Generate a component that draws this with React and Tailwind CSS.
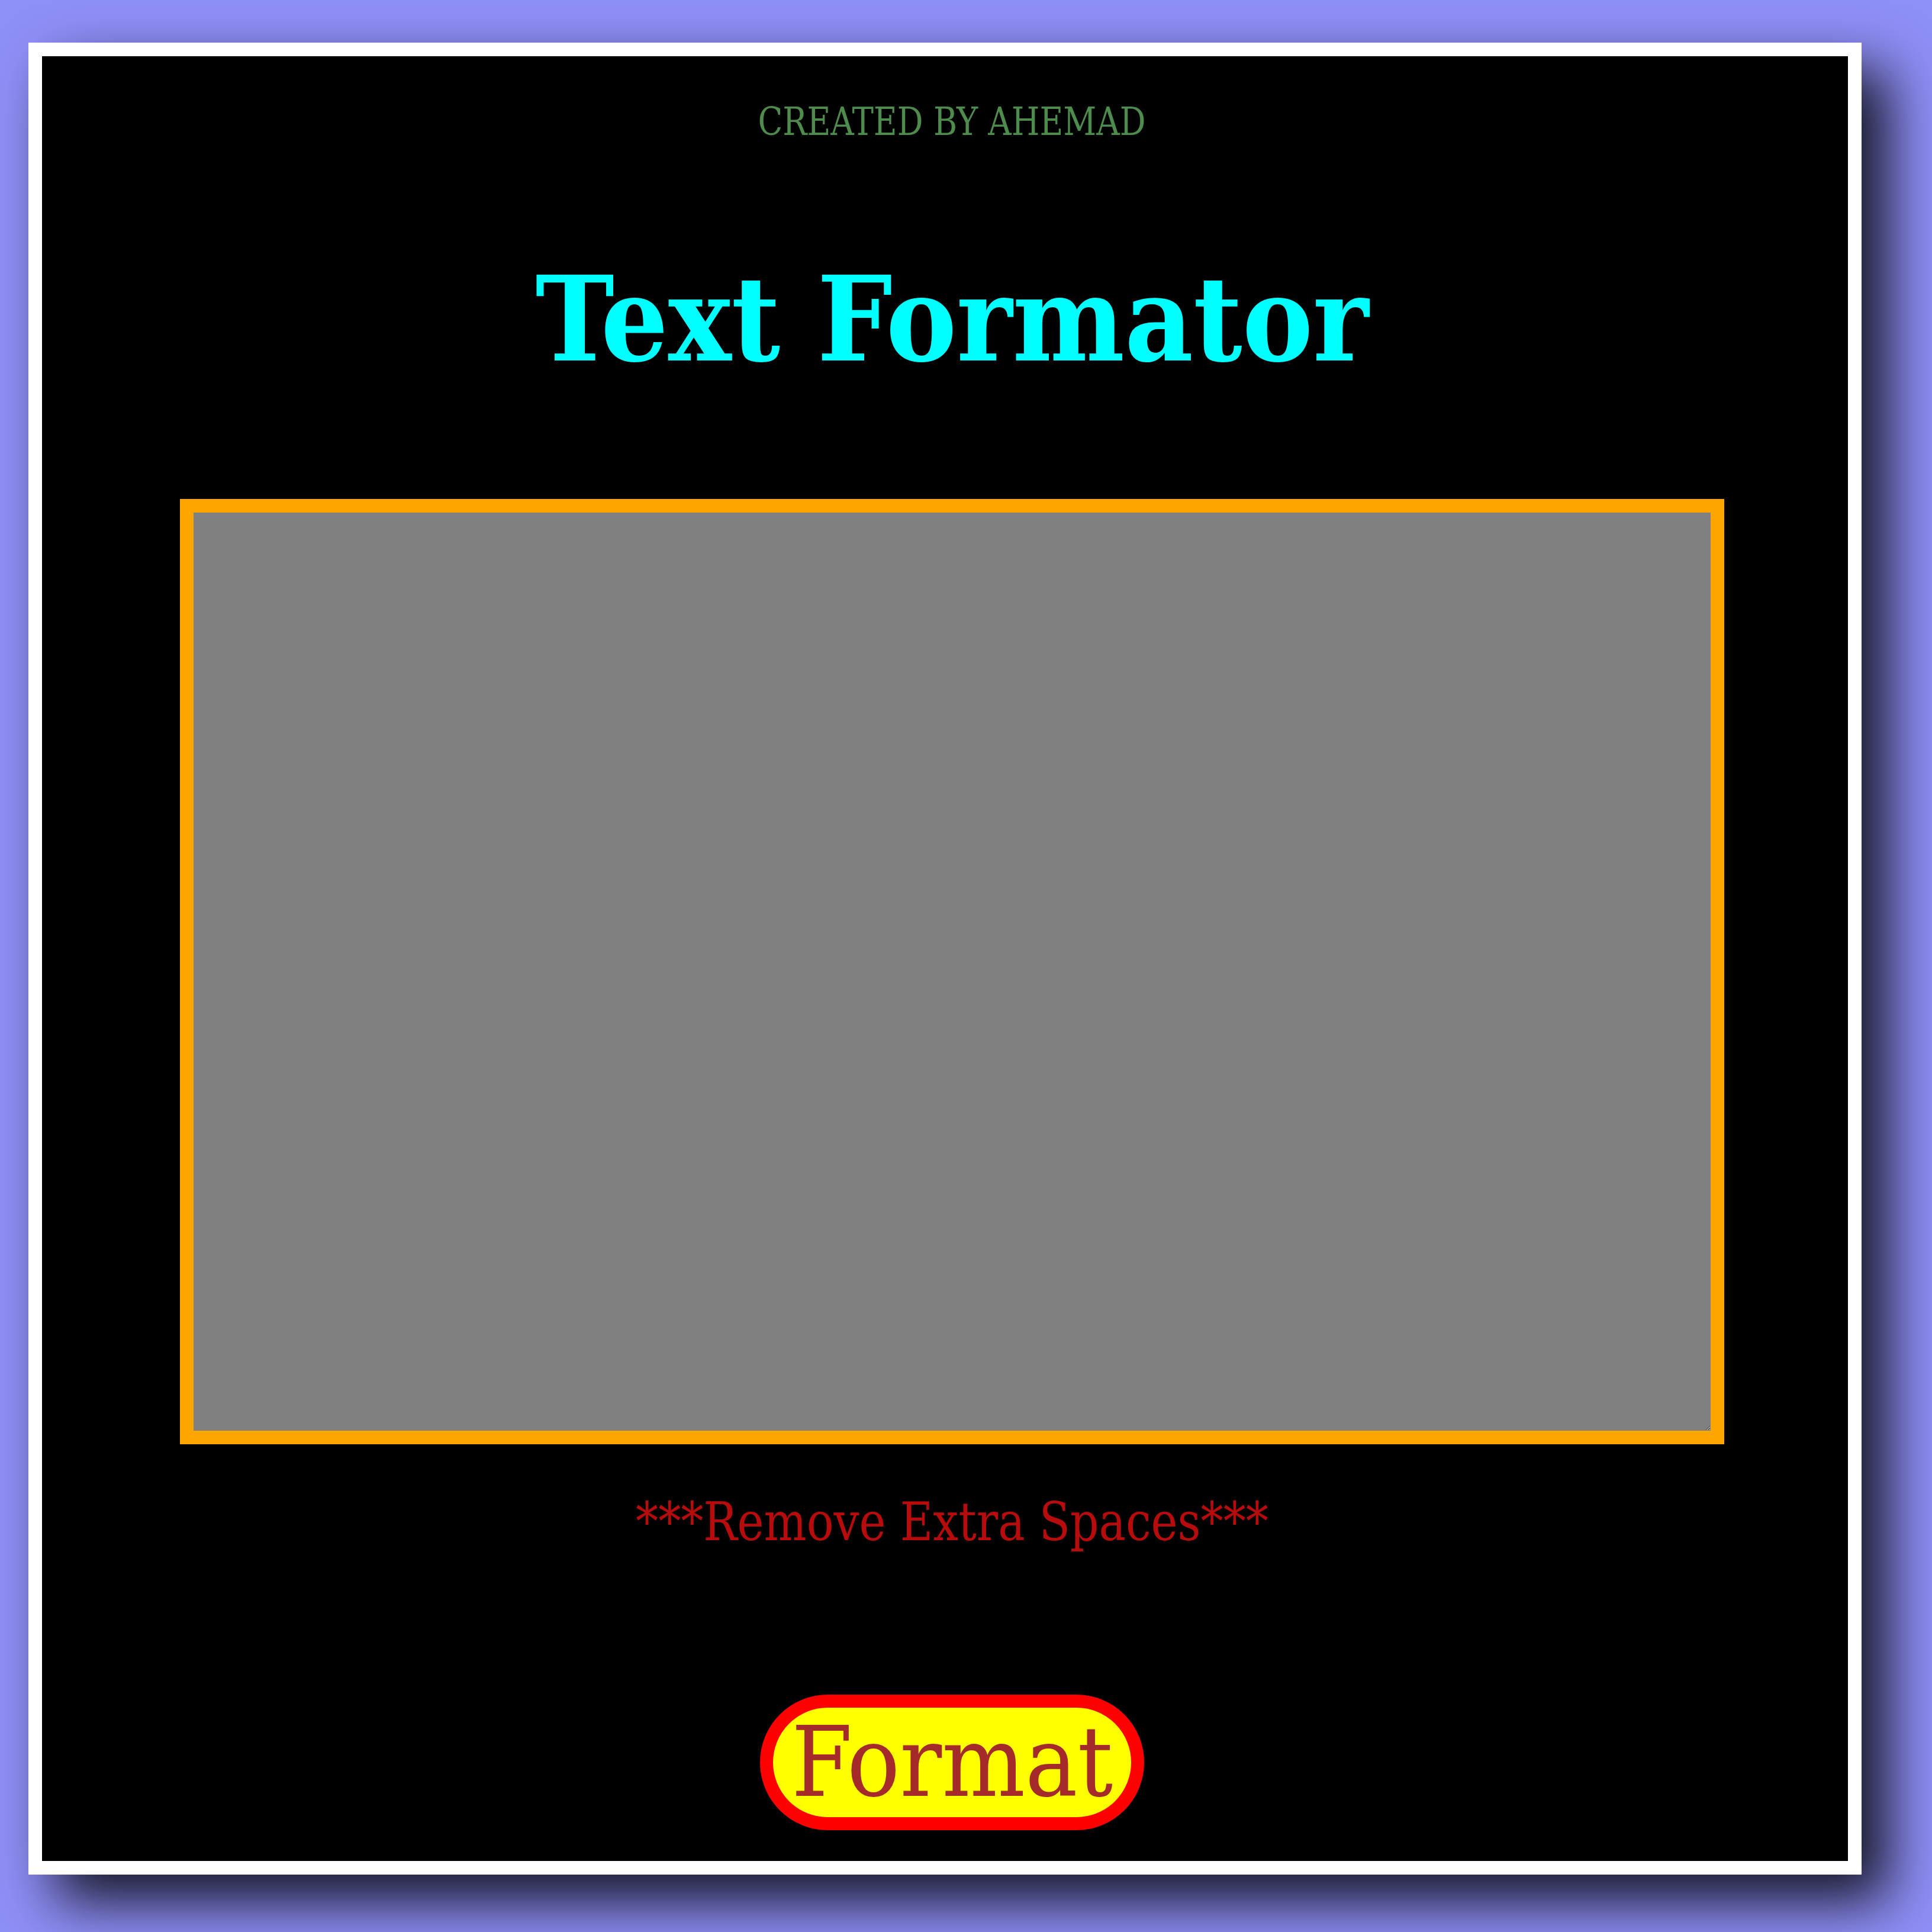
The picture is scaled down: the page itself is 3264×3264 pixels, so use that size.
import React, { useState } from "react";

export default function App() {
  const [text, setText] = useState("");

  const handleFormat = () => {
    setText(text.replace(/\s+/g, " ").trim());
  };

  return (
    <div className="w-[3264px] h-[3264px] bg-[#8f8ff8] pt-[72px] pl-[48px] overflow-hidden">
      <div className="w-[3097px] h-[3095px] bg-white p-[23px] shadow-[45px_45px_90px_rgba(0,0,0,0.85)]">
        <div
          className="w-full h-full bg-black flex flex-col items-center pl-[24px] font-stretch-condensed"
          style={{ fontFamily: '"DejaVu Serif Condensed", "DejaVu Serif", serif' }}
        >
          <p className="mt-[78px] text-[66px] leading-none text-[#4e8c4e] scale-x-[0.92]">
            CREATED BY AHEMAD
          </p>

          <h1 className="mt-[201px] text-[199px] leading-none font-bold text-[#00ffff]">
            Text Formator
          </h1>

          <textarea
            value={text}
            onChange={(e) => setText(e.target.value)}
            className="mt-[204px] w-[2609px] h-[1597px] shrink-0 bg-[#808080] border-[23px] border-[#ffa500] outline-none text-[60px] p-4"
          />

          <p className="mt-[86px] text-[90px] leading-none text-[#b80c0c] scale-x-[0.94]">
            ***Remove Extra Spaces***
          </p>

          <button
            onClick={handleFormat}
            className="mt-[247px] w-[649px] h-[229px] shrink-0 rounded-full bg-[#ffff00] border-[22px] border-[#ff0000] text-[165px] leading-none text-[#a52a2a] flex items-center justify-center"
          >
            Format
          </button>
        </div>
      </div>
    </div>
  );
}
